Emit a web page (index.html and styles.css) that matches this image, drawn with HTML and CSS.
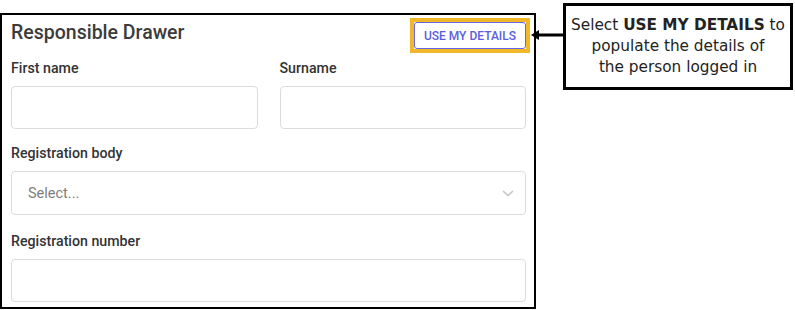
FILE: index.html
```html
<!DOCTYPE html>
<html lang="en">
<head>
    <meta charset="UTF-8">
    <meta name="viewport" content="width=device-width, initial-scale=1.0">
    <title>Responsible Drawer</title>
    <link rel="stylesheet" href="styles.css">
</head>
<body>

    <div class="page">
        <div class="panel">
            <div class="panel-head">
                <h2>Responsible Drawer</h2>
                <span class="highlight">
                    <button type="button" class="details-btn">USE MY DETAILS</button>
                </span>
            </div>

            <div class="row first-row">
                <div class="field">
                    <label>First name</label>
                    <input type="text" id="first_name">
                </div>
                <div class="field">
                    <label>Surname</label>
                    <input type="text" id="surname">
                </div>
            </div>

            <div class="field body-field">
                <label>Registration body</label>
                <div class="select">
                    <span class="placeholder">Select...</span>
                    <svg class="chevron" width="12" height="7" viewBox="0 0 12 7">
                        <path d="M1 1 L6 5.5 L11 1" fill="none" stroke="#c4c4c4" stroke-width="1.6"/>
                    </svg>
                </div>
            </div>

            <div class="field number-field">
                <label>Registration number</label>
                <input type="text" id="registration_number">
            </div>
        </div>

        <!-- annotation -->
        <svg class="pointer" width="34" height="12" viewBox="0 0 34 12">
            <polygon points="0,6 8,1 8,11" fill="#000"/>
            <rect x="7" y="4.5" width="27" height="3" fill="#000"/>
        </svg>
        <div class="callout">
            <p>Select <b>USE MY DETAILS</b> to<br>
            populate the details of<br>
            the person logged in</p>
        </div>
    </div>

</body>
</html>
```

FILE: styles.css
```css
body {
    margin: 0;
    background: #fff;
    font-family: Roboto, Arial, sans-serif;
}
.page {
    position: relative;
    width: 795px;
    height: 310px;
    padding-top: 13px;
    box-sizing: border-box;
}
.panel {
    width: 536px;
    box-sizing: border-box;
    border: 2px solid #000;
    border-right-width: 2.5px;
    padding: 6px 8px 5px 9px;
}
.panel-head {
    display: flex;
    justify-content: space-between;
    align-items: flex-start;
    height: 28px;
}
h2 {
    margin: 0;
    font-size: 19.5px;
    line-height: 24px;
    font-weight: 500;
    color: #3b3b3b;
}
.highlight {
    display: block;
    margin-top: -3px;
    margin-right: -4px;
    border: 4px solid #f1b92a;
}
.details-btn {
    display: block;
    height: 27px;
    padding: 0 9px;
    background: #fff;
    border: 1px solid #6468e6;
    border-radius: 3px;
    color: #5a5ee0;
    font-family: Roboto, Arial, sans-serif;
    font-size: 12px;
    font-weight: 500;
    cursor: pointer;
}
.row {
    display: flex;
    gap: 22px;
}
.row .field {
    flex: 1;
}
.first-row {
    margin-top: 9px;
}
.body-field {
    margin-top: 14px;
}
.number-field {
    margin-top: 16px;
}
label {
    display: block;
    font-size: 14.2px;
    line-height: 20px;
    font-weight: 500;
    color: #333;
    margin-bottom: 8px;
}
input {
    display: block;
    width: 100%;
    box-sizing: border-box;
    height: 43px;
    border: 1px solid #dcdcdc;
    border-radius: 4px;
    padding: 0 16px;
    font-family: Roboto, Arial, sans-serif;
    font-size: 14px;
}
.select {
    height: 44px;
    box-sizing: border-box;
    border: 1px solid #dcdcdc;
    border-radius: 4px;
    padding: 0 11px 0 16px;
    display: flex;
    align-items: center;
    justify-content: space-between;
}
.placeholder {
    font-size: 14.5px;
    color: #7d7d7d;
}
.chevron {
    display: block;
}
.pointer {
    position: absolute;
    left: 531px;
    top: 29px;
}
.callout {
    position: absolute;
    left: 563px;
    top: 3px;
    width: 230px;
    height: 87px;
    box-sizing: border-box;
    border: 3.5px solid #000;
    display: flex;
    align-items: center;
    justify-content: center;
    text-align: center;
    font-family: "DejaVu Sans", sans-serif;
    font-size: 15.3px;
    line-height: 21px;
    color: #222;
}
.callout p {
    margin: 0;
}
.callout b {
    font-weight: bold;
}
```
